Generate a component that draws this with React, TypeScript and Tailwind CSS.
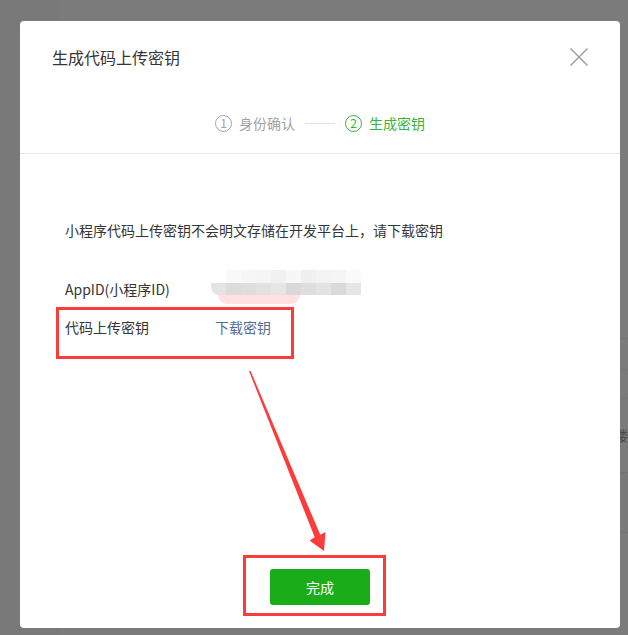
import * as React from "react";

const FONT = { fontFamily: '"Noto Sans CJK SC", "Noto Sans", sans-serif' };

const TOP_TILES = ["#f9f9f9", "#f6f6f6", "#f5f5f5", "#f1f1f1", "#f7f7f7", "#f0f0f0", "#f3f3f3", "#f5f5f5", "#fafafa"];
const BOTTOM_TILES = ["#e4e4e4", "#dcdcdc", "#dedede", "#e2e2e2", "#e6e6e6", "#d9d9d9", "#dedede", "#e3e3e3", "#dadada", "#e6e6e6"];

function StepDot({ n, active }: { n: number; active?: boolean }) {
  return (
    <span
      className={`flex h-[17px] w-[17px] items-center justify-center rounded-full border text-[12px] leading-none ${
        active ? "border-[#3cb13c] text-[#3cb13c]" : "border-[#a3a3a3] text-[#a3a3a3]"
      }`}
    >
      {n}
    </span>
  );
}

// mosaic that hides the AppID value
function Redacted() {
  return (
    <div className="absolute left-[146px] top-[-9px] w-[152px]">
      <div className="ml-[15px] flex h-[13px]">
        {TOP_TILES.map((c, i) => (
          <span key={i} className="h-full w-[15px]" style={{ background: c }} />
        ))}
      </div>
      <div className="flex h-[12px] overflow-hidden rounded-bl-[8px] rounded-br-[3px]">
        {BOTTOM_TILES.map((c, i) => (
          <span key={i} className="h-full w-[15px]" style={{ background: c }} />
        ))}
      </div>
      <div className="ml-[7px] h-[9px] w-[82px] rounded-b-[10px] bg-[#ffd9d9] opacity-80" />
    </div>
  );
}

export default function App() {
  return (
    <div className="relative flex h-[635px] w-[628px] overflow-hidden bg-[#7b7b7b]" style={FONT}>
      {/* page behind the modal */}
      <div className="w-[66px] bg-[#797979]" />
      <div className="flex flex-1 flex-col pt-[338px]">
        <div className="h-[31px] border-t border-[#737473] bg-[#7b7b7b]" />
        <div className="h-[29px] border-t border-[#737473] bg-[#797a79]" />
        <div className="flex h-[74px] items-center border-t border-[#737473] pl-[554px] text-[14px] text-[#4a4a4a]">
          楼
        </div>
        <div className="h-[60px] border-t border-[#737473] bg-[#787978]" />
        <div className="flex-1 border-t border-[#737473]" />
      </div>

      {/* modal */}
      <div className="absolute left-[20px] top-[21px] flex h-[607px] w-[600px] flex-col rounded-[4px] bg-white">
        <div className="flex h-[72px] items-center justify-between px-[32px]">
          <span className="text-[16px] text-[#353535]">生成代码上传密钥</span>
          <svg width="18" height="18" viewBox="0 0 18 18" className="text-[#a0a0a0]">
            <path d="M0.5 0.5 L17.5 17.5 M17.5 0.5 L0.5 17.5" stroke="currentColor" strokeWidth="1.5" />
          </svg>
        </div>

        <div className="flex h-[61px] items-center justify-center border-b border-[#e7e7e7] text-[14px]">
          <StepDot n={1} />
          <span className="ml-[7px] text-[#a3a3a3]">身份确认</span>
          <span className="mx-[10px] h-px w-[30px] bg-[#dde0e5]" />
          <StepDot n={2} active />
          <span className="ml-[7px] text-[#3cb13c]">生成密钥</span>
        </div>

        <div className="relative flex flex-1 flex-col px-[45px] text-[14px] text-[#353535]">
          <p className="mt-[66px] leading-[20px]">小程序代码上传密钥不会明文存储在开发平台上，请下载密钥</p>
          <div className="relative mt-[39px] flex leading-[20px]">
            <span>AppID(小程序ID)</span>
            <Redacted />
          </div>
          <div className="mt-[18px] flex leading-[20px]">
            <span className="w-[150px]">代码上传密钥</span>
            <span className="text-[#576b95]">下载密钥</span>
          </div>

          <div className="mt-auto flex justify-center pb-[23px]">
            <button className="h-[36px] w-[100px] rounded-[3px] bg-[#1aad19] text-[14px] text-white">完成</button>
          </div>

          {/* annotation boxes */}
          <div className="absolute left-[36px] top-[153px] h-[52px] w-[238px] border-[3px] border-[#fc3b3b]" />
          <div className="absolute left-[223px] top-[401px] h-[61px] w-[143px] border-[3px] border-[#fc3b3b]" />
        </div>
      </div>

      {/* annotation arrow */}
      <svg className="pointer-events-none absolute left-0 top-0" width="628" height="635">
        <polygon
          points="249,371 250.6,371 320.3,534.8 325.5,532 324,551 309.5,540.5 314.7,537.2"
          fill="#fc3b3b"
        />
      </svg>
    </div>
  );
}
